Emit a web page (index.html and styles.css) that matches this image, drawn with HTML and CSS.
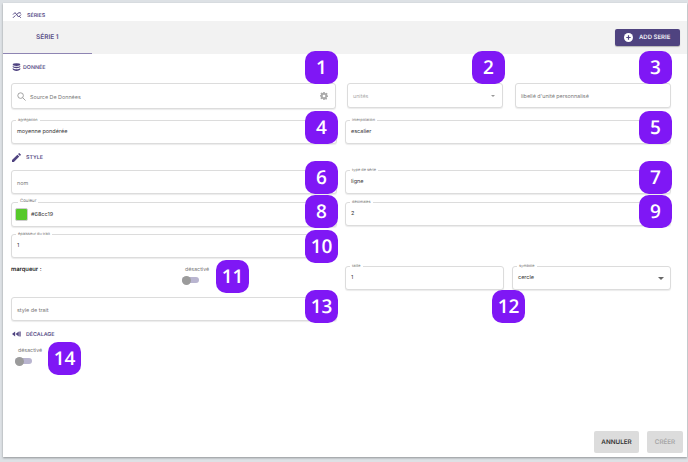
FILE: index.html
```html
<!DOCTYPE html>
<html lang="fr">
<head>
<meta charset="utf-8">
<title>Séries</title>
<link rel="stylesheet" href="styles.css">
</head>
<body>
<div class="panel">
  <div class="section-title top-title">
    <svg class="ico ico-series" viewBox="0 0 12 10"><path d="M1 4.500 3.500 2 8 7.500 11 4.500M1 8.500 4 5.500M6 4 8.500 2 11 2.800M8.800 6.500 10.800 8.500" /></svg>
    <span>SÉRIES</span>
  </div>
  <div class="tabbar">
    <div class="tab">SÉRIE 1</div>
    <button class="add-btn">
      <svg class="plus" viewBox="0 0 10 10"><circle cx="5" cy="5" r="5" fill="#fff"/><path d="M5 2.600v4.800M2.600 5h4.800" stroke="#4f4380" stroke-width="1.300"/></svg>
      <span>ADD SERIE</span>
    </button>
  </div>

  <div class="section-title donnee-title">
    <svg class="ico-db" viewBox="0 0 10 10"><ellipse cx="5" cy="1.800" rx="4.200" ry="1.600"/><path d="M.8 3v1.200C.8 5 2.700 5.800 5 5.800s4.200-.8 4.200-1.600V3C8.600 3.900 6.900 4.300 5 4.300S1.400 3.900.8 3ZM.8 5.600V7c0 .9 1.900 1.800 4.200 1.800S9.200 7.900 9.200 7V5.600C8.600 6.500 6.900 7 5 7S1.400 6.500.8 5.600Z"/></svg>
    <span>DONNÉE</span>
  </div>

  <div class="row row-source">
    <div class="field source">
      <svg class="search" viewBox="0 0 10 10"><circle cx="4" cy="4" r="3.100"/><path d="M6.300 6.300 9.500 9.500"/></svg>
      <span class="placeholder grow">Source De Données</span>
      <svg class="gear" viewBox="0 0 10 10"><path fill-rule="evenodd" d="M4.100 0h1.800l.3 1.300.9.400 1.200-.7 1.200 1.200-.7 1.200.4.900L10 4.300v1.800l-1.300.3-.4.900.7 1.200-1.200 1.200-1.200-.7-.9.400L5.900 10H4.100l-.3-1.300-.9-.4-1.200.7L.5 7.800l.7-1.200-.4-.9L-.1 5.500V4.100l1-.3.400-.9-.7-1.200L1.800.5 3 1.200l.9-.4ZM5 3.300a1.700 1.700 0 1 0 0 3.400 1.700 1.700 0 0 0 0-3.400Z"/></svg>
    </div>
    <div class="source-side">
      <div class="field unit">
        <span class="placeholder pale grow">unités</span>
        <svg class="caret small" viewBox="0 0 6 3"><path d="M0 0h6L3 3Z"/></svg>
      </div>
      <div class="field unit">
        <span class="placeholder">libellé d'unité personnalisé</span>
      </div>
    </div>
  </div>

  <div class="row row-agg">
    <div class="field"><span class="legend">agrégation</span><span class="value">moyenne pondérée</span></div>
    <div class="field"><span class="legend">interpolation</span><span class="value">escalier</span></div>
  </div>

  <div class="section-title style-title">
    <svg class="ico-pen" viewBox="0 0 10 10"><path d="M0 10V7.900L6 1.900 8.100 4 2.100 10ZM6.700 1.200 7.700.2q.3-.3.600 0l1.500 1.500q.3.300 0 .6l-1 1Z"/></svg>
    <span>STYLE</span>
  </div>

  <div class="row row-name">
    <div class="field"><span class="placeholder">nom</span></div>
    <div class="field"><span class="legend">type de série</span><span class="value">ligne</span></div>
  </div>
  <div class="row row-color">
    <div class="field color-field"><span class="legend legend-wide">Couleur</span><span class="swatch"></span><span class="value">#68cc19</span></div>
    <div class="field short"><span class="legend">décimales</span><span class="value">2</span></div>
  </div>

  <div class="row row-marker">
    <div class="left-stack">
      <div class="field"><span class="legend">épaisseur du trait</span><span class="value">1</span></div>
      <div class="marker-line">
        <span class="marker-label">marqueur :</span>
        <div class="toggle-box">
          <span class="toggle-label">désactivé</span>
          <span class="toggle"><span class="knob"></span></span>
        </div>
      </div>
      <div class="field"><span class="placeholder">style de trait</span></div>
    </div>
    <div class="right-pair">
      <div class="field"><span class="legend">taille</span><span class="value">1</span></div>
      <div class="field"><span class="legend">symbole</span><span class="value grow">cercle</span><svg class="caret" viewBox="0 0 6 3"><path d="M0 0h6L3 3Z"/></svg></div>
    </div>
  </div>

  <div class="section-title decal-title">
    <svg class="ico-rew" viewBox="0 0 10 6"><path d="M0 3 3.500 .3V5.700ZM4 3 7.500 .3V5.700ZM8.200 .3h1.400v5.400H8.200Z"/></svg>
    <span>DÉCALAGE</span>
  </div>
  <div class="toggle-box decal-toggle">
    <span class="toggle-label">désactivé</span>
    <span class="toggle"><span class="knob"></span></span>
  </div>

  <div class="footer">
    <button class="btn">ANNULER</button>
    <button class="btn disabled">CRÉER</button>
  </div>

  <span class="badge b1">1</span>
  <span class="badge b2">2</span>
  <span class="badge b3">3</span>
  <span class="badge b4">4</span>
  <span class="badge b5">5</span>
  <span class="badge b6">6</span>
  <span class="badge b7">7</span>
  <span class="badge b8">8</span>
  <span class="badge b9">9</span>
  <span class="badge b10">10</span>
  <span class="badge b11">11</span>
  <span class="badge b12">12</span>
  <span class="badge b13">13</span>
  <span class="badge b14">14</span>
</div>
</body>
</html>
```
FILE: styles.css
```css
* { box-sizing: border-box; }
html, body { margin: 0; height: 100%; }
body {
  background: #dde1e5;
  padding: 3px 1px 5px 3px;
  font-family: Inter, Roboto, "Liberation Sans", sans-serif;
  color: #333;
  overflow: hidden;
  text-rendering: geometricPrecision;
}
.panel {
  position: relative;
  height: 454px;
  background: #fff;
  box-shadow: 0 1px 2px rgba(0,0,0,.35);
  display: flex;
  flex-direction: column;
  padding-bottom: 4px;
}
.section-title {
  display: flex;
  align-items: center;
  gap: 5px;
  padding-left: 9px;
  font-size: 5.300px;
  font-weight: 600;
  color: #5a5088;
  height: 10px;
}
.section-title span { padding-top: 2px; }
.top-title { margin-top: 7px; height: 10px; }
.ico-series { width: 10px; height: 8px; fill: none; stroke: #4f4380; stroke-width: 1.200; }
.ico-db { width: 9px; height: 9px; fill: #4f4380; margin-right: -3px; }
.ico-pen { width: 9px; height: 9px; fill: #4f4380; }
.ico-rew { width: 9px; height: 6px; fill: #4f4380; }

.tabbar {
  margin-top: 1px;
  height: 33px;
  background: #f2f2f2;
  display: flex;
  align-items: center;
  justify-content: space-between;
  padding-right: 7px;
}
.tab {
  width: 89px;
  height: 33px;
  border-bottom: 1px solid #8e85b3;
  padding-left: 33px;
  line-height: 33px;
  font-size: 6.500px;
  font-weight: 600;
  color: #5a5088;
}
.add-btn {
  width: 65px;
  height: 17px;
  margin-top: -1px;
  border: 0;
  border-radius: 2px;
  background: #4f4380;
  color: #f1f0f6;
  font: 600 6px Inter, Roboto, sans-serif;
  text-rendering: geometricPrecision;
  display: flex;
  align-items: center;
  padding: 0 0 0 9px;
  gap: 6px;
  box-shadow: 0 1px 1px rgba(0,0,0,.25);
}
.plus { width: 9px; height: 9px; flex: none; }

.donnee-title { margin-top: 8px; }

.row { display: grid; grid-template-columns: 326px 326px; column-gap: 8px; padding-left: 8px; }
.field {
  position: relative;
  display: flex;
  align-items: center;
  height: 24px;
  padding: 0 5px;
  background: #fff;
  border: 1px solid #dcdcdc;
  border-radius: 3px;
  box-shadow: 0 1px 1px rgba(0,0,0,.08);
  font-size: 5.500px;
}
.grow { flex: 1; }
.placeholder { color: #777; font-size: 5.400px; padding-top: 3px; }
.placeholder.pale { color: #aaa; }
.value { color: #333; }
.legend {
  position: absolute;
  left: 4px;
  top: -4px;
  padding: 0 2px;
  background: #fff;
  font-size: 3.900px;
  line-height: 5px;
  color: #777;
}
.legend-wide { left: 6px; font-size: 4.400px; }

.row-source { margin-top: 11px; grid-template-columns: 325px 324px; column-gap: 11px; }
.source { height: 26px; padding-left: 5px; }
.search { width: 9px; height: 9px; fill: none; stroke: #999; stroke-width: 1; margin-right: 4px; }
.gear { width: 8px; height: 8px; fill: #aaa; margin-right: 2px; }
.source-side { display: flex; gap: 12px; }
.unit { width: 156px; height: 25px; }
.caret { width: 6px; height: 3px; fill: #666; margin-right: 1px; }
.caret.small { width: 4px; height: 2px; fill: #999; margin-right: 2px; }

.row-agg { margin-top: 11px; }
.style-title { margin-top: 8px; }
.row-name { margin-top: 8px; }
.row-color { margin-top: 8px; }
.color-field { height: 25px; padding-left: 3px; }
.swatch { width: 13px; height: 13px; border-radius: 2px; background: #56c92a; border: 1px solid #ccc; margin-right: 3px; }
.short { height: 24px; }

.row-marker { margin-top: 7px; }
.left-stack { display: flex; flex-direction: column; }
.marker-line { height: 39px; display: flex; justify-content: space-between; padding-right: 127px; }
.marker-label { font-size: 5.800px; font-weight: 600; color: #222; margin-top: 8px; }
.toggle-box { display: flex; flex-direction: column; align-items: flex-start; width: 28px; margin-top: 9px; }
.toggle-label { font-size: 5.300px; color: #777; line-height: 7px; margin-left: 3px; }
.toggle {
  position: relative;
  display: block;
  width: 17px;
  height: 6px;
  margin-top: 3px;
  border-radius: 3px;
  background: #b9b5d0;
}
.knob {
  position: absolute;
  left: 0;
  top: -1.500px;
  width: 9px;
  height: 9px;
  border-radius: 50%;
  background: #9b9b9b;
}
.right-pair { display: grid; grid-template-columns: 159px 159px; column-gap: 8px; padding-top: 32px; }

.decal-title { margin-top: 8px; }
.decal-toggle { margin: 9px 0 0 12px; }

.footer {
  margin-top: auto;
  display: flex;
  justify-content: flex-end;
  gap: 8px;
  padding-right: 4px;
}
.btn {
  height: 22px;
  border: 0;
  border-radius: 2px;
  background: #dcdcdc;
  color: #333;
  font: 600 6.300px Inter, Roboto, sans-serif;
  text-rendering: geometricPrecision;
  width: 45px;
  padding: 0;
}
.btn.disabled { width: 36px; color: #a6a6a6; }

.badge {
  position: absolute;
  width: 33px;
  height: 33px;
  border-radius: 10px;
  background: #7f17f5;
  color: #fff;
  font: 600 19px/33px "Open Sans", "Noto Sans", sans-serif;
  text-align: center;
}
.b1 { left: 302px; top: 48px; }
.b2 { left: 469px; top: 48px; }
.b3 { left: 636px; top: 48px; }
.b4 { left: 302px; top: 108px; }
.b5 { left: 636px; top: 108px; }
.b6 { left: 302px; top: 158px; }
.b7 { left: 636px; top: 158px; }
.b8 { left: 302px; top: 192px; }
.b9 { left: 636px; top: 192px; }
.b10 { left: 302px; top: 227px; }
.b11 { left: 213px; top: 257px; }
.b12 { left: 489px; top: 287px; }
.b13 { left: 302px; top: 287px; }
.b14 { left: 45px; top: 339px; }
```
